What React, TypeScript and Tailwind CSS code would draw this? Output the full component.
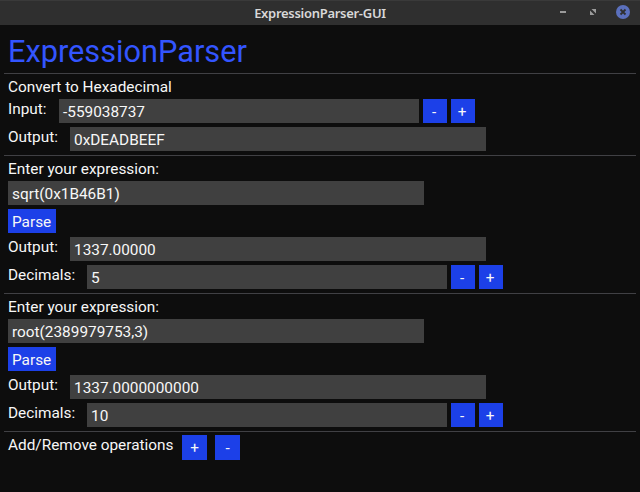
import React from "react";

type BoxProps = { value: string; className: string };

const Field = ({ value, className }: BoxProps) => (
  <div className={`flex h-6 shrink-0 items-center whitespace-nowrap bg-[#404040] pt-0.5 pl-1 ${className}`}>{value}</div>
);

const Step = ({ sign }: { sign: string }) => (
  <button className="flex size-6 shrink-0 items-center justify-center bg-[#1c40e8] pt-0.5 pr-0.5">{sign}</button>
);

const Rule = () => <div className="-mx-1 h-px bg-[#404044]" />;

const Row = ({ label, labelClass, children }: { label: string; labelClass: string; children: React.ReactNode }) => (
  <div className="flex h-6 items-start gap-1">
    <span className={`-mr-1 shrink-0 whitespace-nowrap ${labelClass}`}>{label}</span>
    {children}
  </div>
);

const Expression = ({ expr, result, decimals }: { expr: string; result: string; decimals: string }) => (
  <>
    <section className="flex flex-col gap-1 pt-[3px] pb-1">
      <div className="-mb-0.5">Enter your expression:</div>
      <Field value={expr} className="w-[416px]" />
      <button className="flex h-6 w-12 items-center bg-[#1c40e8] pt-0.5 pl-1">Parse</button>
      <Row label="Output:" labelClass="w-[62px]">
        <Field value={result} className="w-[416px]" />
      </Row>
      <Row label="Decimals:" labelClass="w-[79px]">
        <Field value={decimals} className="w-[360px]" />
        <Step sign="-" />
        <Step sign="+" />
      </Row>
    </section>
    <Rule />
  </>
);

export default function App() {
  return (
    <div className="h-[492px] w-[640px] overflow-hidden bg-[#0d0d0d] font-[Roboto,sans-serif] text-[15.36px] leading-5 text-[#f7f7f7]">
      <header className="grid h-[25px] grid-cols-[1fr_auto_1fr] items-center border-t border-[#3a3a3a] bg-[#2f2f2f]">
        <span />
        <h1 className="whitespace-nowrap font-['Noto_Sans',sans-serif] text-[13px] leading-6 font-semibold tracking-[-0.29px] text-[#d8d8d8]">
          ExpressionParser-GUI
        </h1>
        <div className="flex h-6 items-start justify-end pt-1 pr-[10px]">
          <svg width="6" height="14" className="mr-[24px]" aria-label="Minimize">
            <rect y="6" width="6" height="2" fill="#9b9b9b" />
          </svg>
          <svg width="6" height="14" className="mr-5" aria-label="Maximize">
            <path d="M1.5 4H6v4.5zM0 5.5V10h4.5z" fill="#9b9b9b" />
          </svg>
          <svg width="14" height="14" viewBox="0 0 14 14" aria-label="Close">
            <circle cx="7" cy="7" r="7" fill="#5b70bd" />
            <path d="M4.5 4.5l5 5M9.5 4.5l-5 5" stroke="#2f2f2f" strokeWidth="1.8" />
          </svg>
        </div>
      </header>
      <main className="px-2">
        <h2 className="h-12 pt-[7px] text-[30.72px] leading-10 whitespace-nowrap text-[#3355ff]">ExpressionParser</h2>
        <Rule />
        <section className="flex flex-col gap-1 pt-[3px] pb-1">
          <div className="-mb-0.5">Convert to Hexadecimal</div>
          <Row label="Input:" labelClass="w-[51px]">
            <Field value="-559038737" className="w-[360px]" />
            <Step sign="-" />
            <Step sign="+" />
          </Row>
          <Row label="Output:" labelClass="w-[62px]">
            <Field value="0xDEADBEEF" className="w-[416px]" />
          </Row>
        </section>
        <Rule />
        <Expression expr="sqrt(0x1B46B1)" result="1337.00000" decimals="5" />
        <Expression expr="root(2389979753,3)" result="1337.0000000000" decimals="10" />
        <div className="flex items-start pt-[3px]">
          <span className="w-[174px] whitespace-nowrap">Add/Remove operations</span>
          <button className="mr-2 flex size-[25px] items-center justify-center bg-[#1c40e8]">+</button>
          <button className="flex size-[25px] items-center justify-center bg-[#1c40e8]">-</button>
        </div>
      </main>
    </div>
  );
}
